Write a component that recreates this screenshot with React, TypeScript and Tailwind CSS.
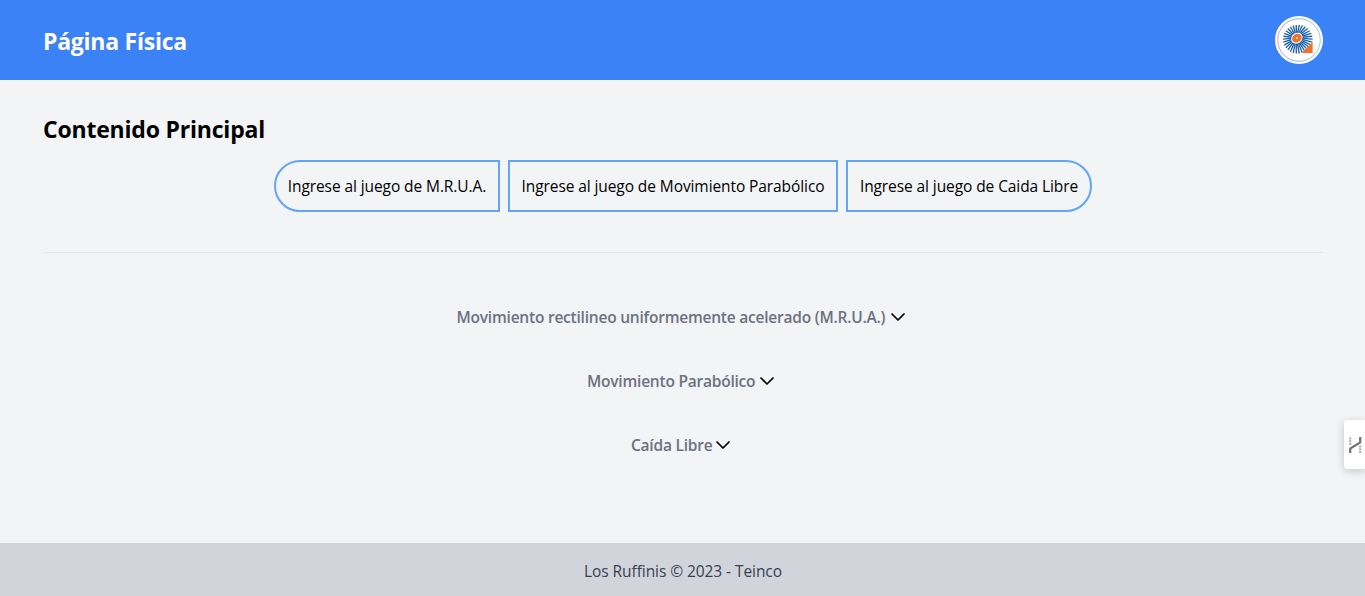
import React from "react";

const rays = Array.from({ length: 30 }, (_, i) => (i * 360) / 30);

function Logo() {
  return (
    <svg viewBox="0 0 48 48" className="h-12 w-12 shrink-0" aria-label="Teinco">
      <defs>
        <linearGradient id="ring" x1="0" y1="0" x2="1" y2="0">
          <stop offset="0" stopColor="#f58ab0" />
          <stop offset="0.3" stopColor="#8fa0cf" />
          <stop offset="1" stopColor="#7fd0dc" />
        </linearGradient>
      </defs>
      <circle cx="24" cy="24" r="24" fill="#fff" />
      <circle cx="24" cy="24" r="21.3" fill="none" stroke="url(#ring)" strokeWidth="0.9" />
      <g stroke="#1d62a8" strokeWidth="1.35">
        {rays.map((a) => {
          const r = (a * Math.PI) / 180;
          const c = Math.cos(r);
          const s = Math.sin(r);
          return (
            <line key={a} x1={21.8 + 5 * c} y1={22.3 + 5 * s} x2={22.8 + 14.8 * c} y2={23.2 + 14.4 * s} />
          );
        })}
      </g>
      <path d="M38.5 25v13H25.5z" fill="#fff" />
      <path d="M37.6 26v10.9H26.4z" fill="#f2712b" />
      <ellipse cx="21.8" cy="22.2" rx="6" ry="5" fill="#fff" transform="rotate(-35 21.8 22.2)" />
      <ellipse cx="21.8" cy="22.2" rx="5" ry="4.1" fill="#f2712b" transform="rotate(-35 21.8 22.2)" />
      <circle cx="21.8" cy="22" r="1" fill="#fbe0d0" />
    </svg>
  );
}

function Chevron() {
  return (
    <svg viewBox="0 0 16 16" className="h-4 w-4" fill="none" stroke="#000" strokeWidth="1.7" strokeLinecap="round" strokeLinejoin="round">
      <path d="M2 5l6 6 6-6" />
    </svg>
  );
}

const games = [
  { label: "Ingrese al juego de M.R.U.A.", style: "w-[226px] rounded-l-full" },
  { label: "Ingrese al juego de Movimiento Parabólico", style: "w-[330px]" },
  { label: "Ingrese al juego de Caida Libre", style: "w-[246px] rounded-r-full" },
];

const topics = [
  { label: "Movimiento rectilineo uniformemente acelerado (M.R.U.A.)", style: "w-[430px]" },
  { label: "Movimiento Parabólico", style: "w-[169px]" },
  { label: "Caída Libre", style: "w-[81px]" },
];

export default function App() {
  return (
    <div className="relative flex h-[596px] flex-col overflow-hidden bg-[#f3f4f6] font-['Open_Sans',sans-serif] text-[15.5px] leading-6 text-black">
      <header className="flex h-20 shrink-0 items-center justify-between bg-[#3b82f6] pr-[42px] pl-[43px]">
        <h1 className="pt-0.5 text-[23px] leading-8 font-bold tracking-[-0.25px] whitespace-nowrap text-white">Página Física</h1>
        <Logo />
      </header>
      <main className="flex grow flex-col px-[43px] pt-8">
        <h2 className="h-12 pt-px text-[23px] leading-8 font-bold tracking-[-0.2px]">Contenido Principal</h2>
        <div className="flex justify-center gap-2">
          {games.map((g) => (
            <button key={g.label} className={`flex h-[52px] items-center justify-center border-2 border-[#60a5fa] pl-px tracking-[-0.09px] whitespace-nowrap ${g.style}`}>
              {g.label}
            </button>
          ))}
        </div>
        <hr className="mt-10 -mr-px border-[#e5e7eb]" />
        <div className="mt-[52px] flex flex-col items-center gap-10 pr-[3px]">
          {topics.map((t) => (
            <button key={t.label} className="flex h-6 items-center gap-[3px]">
              <span className={`text-left font-semibold tracking-[-0.22px] whitespace-nowrap text-[#6b7280] ${t.style}`}>{t.label}</span>
              <Chevron />
            </button>
          ))}
        </div>
      </main>
      <footer className="flex h-[53px] shrink-0 items-center justify-center bg-[#d1d5db] pt-[3px] pl-px tracking-[-0.07px] text-[#374151]">
        Los Ruffinis © 2023 - Teinco
      </footer>
      <aside className="absolute top-[420px] right-0 flex h-[49px] w-[21px] items-center justify-end rounded-l bg-white pr-[3px] shadow-[0_2px_8px_rgba(0,0,0,0.2)]">
        <svg viewBox="0 0 13 18" className="h-[18px] w-[13px]" fill="none" stroke="#707070">
          <path d="M1.2 17v-4.5l10-6V1" strokeWidth="2.2" />
          <path d="M1.2 1.5v7.5M11.2 9.5v7.5" stroke="#b0b0b0" strokeWidth="2.2" strokeDasharray="2 0.8" />
        </svg>
      </aside>
    </div>
  );
}
